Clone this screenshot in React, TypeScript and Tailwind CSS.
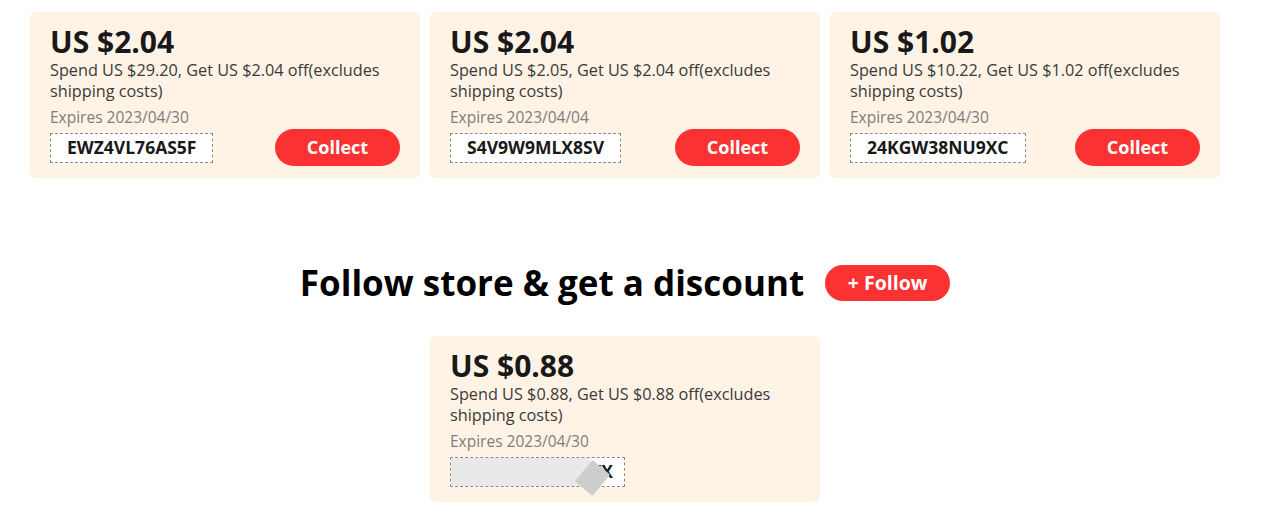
import React from "react";

type Coupon = {
  amount: string;
  spend: string;
  expires: string;
  code: string;
  hidden?: boolean;
};

const coupons: Coupon[] = [
  { amount: "US $2.04", spend: "Spend US $29.20, Get US $2.04 off(excludes shipping costs)", expires: "Expires 2023/04/30", code: "EWZ4VL76AS5F" },
  { amount: "US $2.04", spend: "Spend US $2.05, Get US $2.04 off(excludes shipping costs)", expires: "Expires 2023/04/04", code: "S4V9W9MLX8SV" },
  { amount: "US $1.02", spend: "Spend US $10.22, Get US $1.02 off(excludes shipping costs)", expires: "Expires 2023/04/30", code: "24KGW38NU9XC" },
];

const followCoupon: Coupon = {
  amount: "US $0.88",
  spend: "Spend US $0.88, Get US $0.88 off(excludes shipping costs)",
  expires: "Expires 2023/04/30",
  code: "8S4V9ML2XT7X",
  hidden: true,
};

function CouponCard({ c }: { c: Coupon }) {
  return (
    <div className="w-[390px] h-[166px] bg-[#fff3e6] rounded-[5px] px-5 pt-[12px]">
      <div className="text-[30px] leading-[36px] font-bold text-[#191919]">{c.amount}</div>
      <div className="text-[16.25px] leading-[21px] text-[#3a3a3a] pr-4">{c.spend}</div>
      <div className="mt-[5px] text-[15.5px] leading-[20px] text-[#7d7d7d]">{c.expires}</div>
      <div className="mt-[2px] h-[37px] flex items-center justify-between">
        {c.hidden ? (
          <div className="relative h-[30px] w-[175px] pr-[11px] flex items-center justify-end bg-white border border-dashed border-[#8a8a8a] text-[17.5px] font-bold text-[#191919] overflow-hidden whitespace-nowrap">
            {c.code}
            <div className="absolute left-0 top-0 bottom-0 w-[140px] bg-[#e9e9e9]" />
          </div>
        ) : (
          <div className="h-[30px] px-4 flex items-center bg-white border border-dashed border-[#8a8a8a] text-[17.5px] font-bold text-[#191919]">
            {c.code}
          </div>
        )}
        {!c.hidden && (
          <button className="h-[37px] w-[125px] rounded-full bg-[#fc3131] text-white text-[18px] font-bold">
            Collect
          </button>
        )}
      </div>
    </div>
  );
}

export default function App() {
  return (
    <div className="w-[1286px] h-[514px] bg-white overflow-hidden" style={{ fontFamily: '"Open Sans", "Liberation Sans", sans-serif' }}>
      <div className="w-[1190px] ml-[30px] pt-3">
        <div className="flex gap-[10px]">
          {coupons.map((c) => (
            <CouponCard key={c.code} c={c} />
          ))}
        </div>

        <div className="mt-[87px] flex items-center justify-center gap-[21px]">
          <h2 className="text-[35px] leading-[36px] font-bold text-black">Follow store &amp; get a discount</h2>
          <button className="h-[36px] w-[125px] rounded-full bg-[#fc3131] text-white text-[19.5px] font-bold">
            + Follow
          </button>
        </div>

        <div className="mt-[35px] flex justify-center">
          <div className="relative">
            <CouponCard c={followCoupon} />
            <div className="absolute left-[151px] top-[128px] w-[23px] h-[28px] bg-[#cdcdcd] rotate-[40deg] rounded-[2px]" />
          </div>
        </div>
      </div>
    </div>
  );
}
